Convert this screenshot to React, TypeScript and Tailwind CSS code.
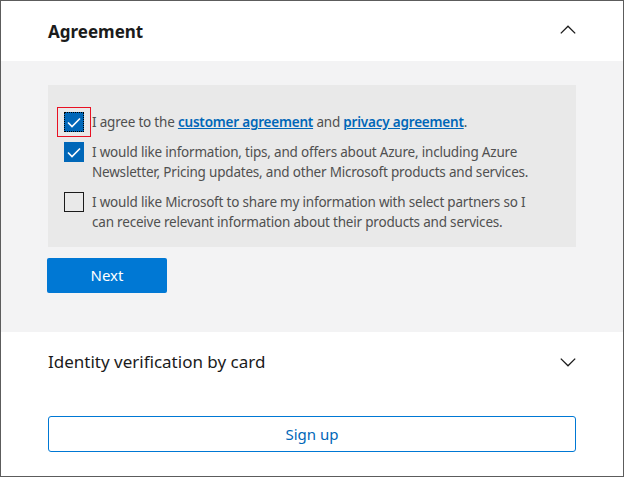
import React from "react";

const font = { fontFamily: '"Noto Sans", "Open Sans", sans-serif' };

function Check() {
  return (
    <svg width="14" height="11" viewBox="0 0 14 11" fill="none">
      <path d="M1 5.5 L5 9.5 L13 1.5" stroke="white" strokeWidth="1.6" />
    </svg>
  );
}

function Box({ checked, focus }: { checked?: boolean; focus?: boolean }) {
  return (
    <div className="relative shrink-0 w-[20px] h-[20px]">
      {checked ? (
        <div className="w-[20px] h-[20px] bg-[#0067b8] flex items-center justify-center">
          <Check />
        </div>
      ) : (
        <div className="w-[20px] h-[20px] border border-[#1b1b1b] bg-transparent" />
      )}
      {focus && (
        <>
          <div className="absolute inset-0 border border-dotted border-black" />
          <div className="absolute left-[-7px] top-[-5px] w-[34px] h-[30px] border border-[#e81123]" />
        </>
      )}
    </div>
  );
}

function Chevron({ up }: { up?: boolean }) {
  return (
    <svg width="16" height="9" viewBox="0 0 16 9" fill="none">
      {up ? (
        <path d="M0.8 8.4 L8 1.2 L15.2 8.4" stroke="#1b1b1b" strokeWidth="1.3" />
      ) : (
        <path d="M0.8 0.6 L8 7.8 L15.2 0.6" stroke="#1b1b1b" strokeWidth="1.3" />
      )}
    </svg>
  );
}

export default function App() {
  return (
    <div
      className="w-[624px] h-[477px] border border-[#5c5c5c] bg-white flex flex-col overflow-hidden"
      style={font}
    >
      <div className="h-[60px] shrink-0 pl-[47px] pr-[47px] flex items-center justify-between">
        <div className="text-[17px] font-bold text-[#1b1b1b] leading-none">Agreement</div>
        <div className="pb-[3px]">
          <Chevron up />
        </div>
      </div>
      <div className="bg-[#f3f3f4] pl-[47px] pr-[47px] pt-[24px] h-[271px] shrink-0">
        <div className="bg-[#e9e9e9] pl-[16px] pr-[8px] pt-[27px] pb-[15px] flex flex-col gap-[10px] text-[13.5px] tracking-[-0.2px] leading-[20px] text-[#505050]">
          <div className="flex items-start gap-[8px]">
            <Box checked focus />
            <div>
              I agree to the{" "}
              <span className="text-[#0067b8] font-semibold underline">customer agreement</span> and{" "}
              <span className="text-[#0067b8] font-semibold underline">privacy agreement</span>.
            </div>
          </div>
          <div className="flex items-start gap-[8px]">
            <Box checked />
            <div>
              I would like information, tips, and offers about Azure, including Azure
              <br />
              Newsletter, Pricing updates, and other Microsoft products and services.
            </div>
          </div>
          <div className="flex items-start gap-[8px]">
            <Box />
            <div>
              I would like Microsoft to share my information with select partners so I
              <br />
              can receive relevant information about their products and services.
            </div>
          </div>
        </div>
        <button className="mt-[11px] ml-[-1px] w-[120px] h-[35px] bg-[#0078d4] text-white text-[15px] rounded-[2px] flex items-center justify-center">
          Next
        </button>
      </div>
      <div className="flex-1 pl-[47px] pr-[47px] flex flex-col">
        <div className="h-[60px] flex items-center justify-between">
          <div className="text-[17px] text-[#1b1b1b]">Identity verification by card</div>
          <Chevron />
        </div>
        <button className="mt-[24px] h-[36px] w-full border border-[#0078d4] rounded-[3px] text-[#0067b8] text-[15px] flex items-center justify-center bg-white">
          Sign up
        </button>
      </div>
    </div>
  );
}
